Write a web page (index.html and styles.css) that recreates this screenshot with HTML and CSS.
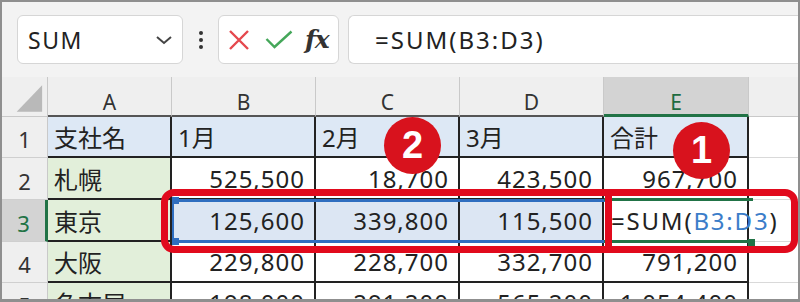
FILE: index.html
```html
<!DOCTYPE html>
<html lang="ja">
<head>
<meta charset="utf-8">
<link rel="stylesheet" href="styles.css">
</head>
<body>
<div class="frame">
  <div class="toolbar">
    <div class="namebox">
      <span class="nb-text">SUM</span>
      <svg class="chev" width="18" height="10" viewBox="0 0 18 10"><path d="M2 2 L9 8 L16 2" fill="none" stroke="#444" stroke-width="2"/></svg>
    </div>
    <div class="dots"><i></i><i></i><i></i></div>
    <div class="btns">
      <svg class="ico" width="22" height="22" viewBox="0 0 22 22"><path d="M2 2 L20 20 M20 2 L2 20" stroke="#e5484d" stroke-width="2.4" fill="none"/></svg>
      <svg class="ico ok" width="28" height="20" viewBox="0 0 28 20"><path d="M1.5 9 L9.5 17 L26.5 1.5" stroke="#45a75a" stroke-width="2.4" fill="none"/></svg>
      <span class="fx">fx</span>
    </div>
    <div class="formula">=SUM(B3:D3)</div>
  </div>

  <div class="sheet">
    <div class="ch corner"><svg width="46" height="40" viewBox="0 0 46 40"><polygon points="15,35 41,35 41,8" fill="#b9b9b9"/></svg></div>
    <div class="ch">A</div>
    <div class="ch">B</div>
    <div class="ch">C</div>
    <div class="ch">D</div>
    <div class="ch ch-sel">E</div>
    <div class="ch ch-last"></div>

    <div class="rh">1</div>
    <div class="c hdr">支社名</div>
    <div class="c hdr">1月</div>
    <div class="c hdr">2月</div>
    <div class="c hdr">3月</div>
    <div class="c hdr">合計</div>
    <div class="c empty"></div>

    <div class="rh">2</div>
    <div class="c name">札幌</div>
    <div class="c num">525,500</div>
    <div class="c num">18,700</div>
    <div class="c num">423,500</div>
    <div class="c num">967,700</div>
    <div class="c empty"></div>

    <div class="rh rh-sel">3</div>
    <div class="c name">東京</div>
    <div class="c num sel">125,600</div>
    <div class="c num sel">339,800</div>
    <div class="c num sel">115,500</div>
    <div class="c edit">=SUM(<span class="ref">B3:D3</span>)<span class="caret"></span></div>
    <div class="c empty"></div>

    <div class="rh">4</div>
    <div class="c name">大阪</div>
    <div class="c num">229,800</div>
    <div class="c num">228,700</div>
    <div class="c num">332,700</div>
    <div class="c num">791,200</div>
    <div class="c empty"></div>

    <div class="rh">5</div>
    <div class="c name">名古屋</div>
    <div class="c num">198,000</div>
    <div class="c num">291,200</div>
    <div class="c num">565,200</div>
    <div class="c num">1,054,400</div>
    <div class="c empty"></div>

    <div class="range-sel"><i class="h1"></i><i class="h2"></i></div>
    <div class="active-cell"><i class="handle"></i></div>
    <div class="redbox"><i class="divider"></i></div>
    <div class="badge badge-2">2</div>
    <div class="badge badge-1">1</div>
  </div>
</div>
</body>
</html>
```

FILE: styles.css
```css
* { box-sizing: border-box; }
body {
  margin: 0;
  font-family: "Noto Sans", "Noto Sans CJK JP", sans-serif;
  color: #222;
}
.frame {
  position: relative;
  width: 800px;
  height: 302px;
  border: 2px solid #8f8f8f;
  border-bottom-width: 3px;
  overflow: hidden;
  background: #fff;
}
.toolbar {
  display: flex;
  align-items: center;
  height: 75px;
  padding-left: 15px;
  background: #f3f3f3;
}
.namebox {
  width: 166px;
  height: 49px;
  border: 1px solid #d6d6d6;
  border-radius: 6px;
  background: #fff;
  display: flex;
  align-items: center;
  justify-content: space-between;
  padding: 0 9px 0 10px;
}
.nb-text {
  font-size: 23px;
  letter-spacing: 1.5px;
  color: #222;
}
.dots {
  width: 35px;
  display: flex;
  flex-direction: column;
  align-items: center;
  gap: 3px;
}
.dots i {
  display: block;
  width: 4px;
  height: 4px;
  border-radius: 50%;
  background: #333;
}
.btns {
  width: 121px;
  height: 49px;
  border: 1px solid #d6d6d6;
  border-radius: 6px;
  background: #fff;
  display: flex;
  align-items: center;
  padding-left: 9px;
}
.btns .ok { margin-left: 15px; }
.fx {
  margin-left: 12px;
  font-family: "DejaVu Serif", "Liberation Serif", serif;
  font-style: italic;
  font-weight: bold;
  font-size: 25px;
  color: #333;
  letter-spacing: -1px;
}
.formula {
  flex: 1;
  height: 49px;
  margin-left: 9px;
  border: 1px solid #d6d6d6;
  border-right: none;
  border-radius: 6px 0 0 6px;
  background: #fff;
  display: flex;
  align-items: center;
  padding-left: 26px;
  font-size: 24px;
  letter-spacing: 2px;
  color: #222;
}

.sheet {
  position: relative;
  display: grid;
  grid-template-columns: 46px 124px 144px 144px 144px 145px 1fr;
  grid-template-rows: 40px 41px 42px 42px 41px 41px;
}
.ch {
  background: #efefef;
  border-right: 1px solid #c9c9c9;
  border-bottom: 2px solid #555;
  display: flex;
  justify-content: center;
  align-items: center;
  padding-top: 12px;
  font-size: 21px;
  color: #333;
}
.ch.corner {
  padding: 0;
  border-bottom: 1px solid #c9c9c9;
}
.ch.corner svg { display: block; }
.ch-sel {
  background: #d3d3d3;
  color: #1e6b40;
  border-bottom: 3px solid #217346;
}
.ch-last {
  border-right: none;
  border-bottom: 1px solid #c9c9c9;
}
.rh {
  background: #efefef;
  border-right: 1px solid #c9c9c9;
  border-bottom: 1px solid #cfcfcf;
  display: flex;
  justify-content: center;
  align-items: center;
  padding-top: 4px;
  font-size: 22px;
  color: #333;
}
.rh-sel {
  background: #d3d3d3;
  color: #217346;
  border-right: 3px solid #217346;
}
.c {
  border-right: 2px solid #222;
  border-bottom: 2px solid #222;
  display: flex;
  align-items: center;
  font-size: 24px;
  white-space: nowrap;
  color: #222;
}
.hdr {
  background: #dde8f5;
  padding-left: 6px;
}
.name {
  background: #e2efda;
  padding-left: 6px;
}
.num {
  justify-content: flex-end;
  padding-right: 9px;
  letter-spacing: 1px;
}
.sel { background: #dce6f3; }
.edit {
  position: relative;
  z-index: 1;
  padding-left: 7px;
  letter-spacing: 1.8px;
}
.ref { color: #3b7dc9; }
.caret {
  display: inline-block;
  width: 2px;
  height: 38px;
  margin-left: 0;
  background: #222;
}
.empty {
  border-right: none;
  border-bottom: 1px solid #d9d9d9;
}

.range-sel {
  position: absolute;
  left: 170px;
  top: 122px;
  width: 436px;
  height: 44px;
  border-top: 3px solid #2f6ec0;
  border-bottom: 3px solid #2f6ec0;
  border-left: 2px solid #2f6ec0;
}
.range-sel i {
  position: absolute;
  left: -2px;
  width: 7px;
  height: 7px;
  background: #2f6ec0;
}
.range-sel .h1 { top: -5px; }
.range-sel .h2 { bottom: -5px; }
.active-cell {
  position: absolute;
  left: 602px;
  top: 121px;
  width: 149px;
  height: 45px;
  border-top: 3px solid #217346;
  border-bottom: 3px solid #217346;
  z-index: 2;
}
.active-cell .handle {
  position: absolute;
  right: -2px;
  bottom: -6px;
  width: 7px;
  height: 7px;
  background: #217346;
}
.redbox {
  position: absolute;
  left: 159px;
  top: 112px;
  width: 637px;
  height: 64px;
  border: 7px solid #e10a1d;
  border-radius: 13px;
  z-index: 3;
}
.divider {
  position: absolute;
  left: 437px;
  top: 0;
  width: 7px;
  height: 100%;
  background: #e10a1d;
}
.badge {
  position: absolute;
  width: 57px;
  height: 57px;
  border-radius: 50%;
  background: #d8121d;
  color: #fff;
  font-family: "Liberation Sans", Arial, sans-serif;
  font-weight: bold;
  font-size: 38px;
  display: flex;
  justify-content: center;
  align-items: center;
  z-index: 4;
}
.badge-2 { left: 382px; top: 40px; }
.badge-1 { left: 671px; top: 45px; }
```
